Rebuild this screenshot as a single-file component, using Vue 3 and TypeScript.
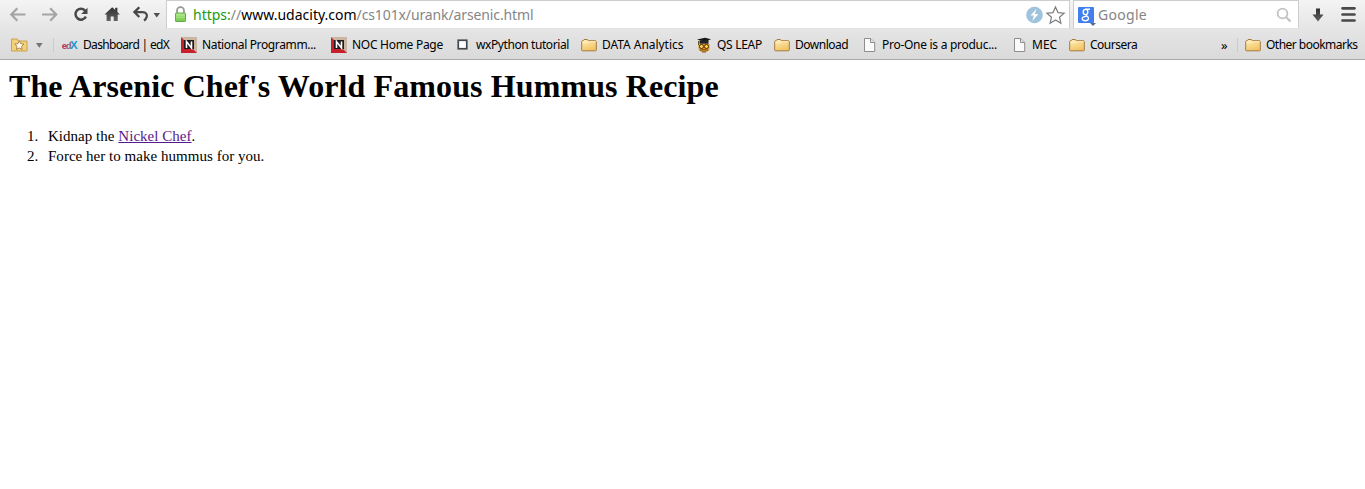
<script setup lang="ts">
interface Bookmark {
  label: string
  icon: 'edx' | 'news' | 'square' | 'folder' | 'owl' | 'page'
  width: number
  spacing: number
}

const bookmarks: Bookmark[] = [
  { label: 'Dashboard | edX', icon: 'edx', width: 119, spacing: -0.67 },
  { label: 'National Programm...', icon: 'news', width: 150, spacing: -0.36 },
  { label: 'NOC Home Page', icon: 'news', width: 124, spacing: -0.28 },
  { label: 'wxPython tutorial', icon: 'square', width: 126, spacing: -0.41 },
  { label: 'DATA Analytics', icon: 'folder', width: 115, spacing: -0.04 },
  { label: 'QS LEAP', icon: 'owl', width: 78, spacing: -0.3 },
  { label: 'Download', icon: 'folder', width: 87, spacing: -0.5 },
  { label: 'Pro-One is a produc...', icon: 'page', width: 150, spacing: -0.28 },
  { label: 'MEC', icon: 'page', width: 58, spacing: 0 },
  { label: 'Coursera', icon: 'folder', width: 80, spacing: -0.5 },
]
</script>

<template>
  <div class="window">
    <svg class="defs" width="0" height="0" aria-hidden="true">
      <defs>
        <linearGradient id="folderFill" x1="0" y1="0" x2="0.4" y2="1">
          <stop offset="0" stop-color="#fff0bd" />
          <stop offset="1" stop-color="#f3c566" />
        </linearGradient>
        <linearGradient id="lockFill" x1="0" y1="0" x2="0" y2="1">
          <stop offset="0" stop-color="#b4ea8c" />
          <stop offset="1" stop-color="#72c94a" />
        </linearGradient>
        <linearGradient id="darkFill" x1="0" y1="0" x2="0" y2="1">
          <stop offset="0" stop-color="#303030" />
          <stop offset="1" stop-color="#636363" />
        </linearGradient>
        <symbol id="folder" viewBox="0 0 16 16">
          <path d="M.7 13V4.400l.8-.7h.7L3 2.500h3.500l.8 1.200h7.200l.8.7V13q0 .8-.9.800H1.500q-.8 0-.8-.8z" fill="url(#folderFill)" stroke="#a77b3d" />
          <path d="M1.500 5.500h5.300l1-.9h6.700" fill="none" stroke="#fff3cd" stroke-width=".8" />
        </symbol>
      </defs>
    </svg>

    <header class="chrome">
      <div class="toolbar">
        <svg class="nav" width="166" height="29" viewBox="0 0 166 29">
          <g fill="none" stroke="#a4a4a4" stroke-width="2.2">
            <path d="M25.500 14.500H11.800M17.300 8.300l-6 6.200 6 6.200" />
            <path d="M42 14.500h13.700M50.200 8.300l6 6.200-6 6.200" />
          </g>
          <path d="M85.300 10.700a5.500 5.500 0 1 0 .6 6" fill="none" stroke="#484848" stroke-width="2.500" />
          <path d="M87.500 7.700v6.200h-6.300z" fill="#484848" />
          <path d="M104.500 14.600l7.700-7.400 3 2.800V7.800h2.200v4.300l2.500 2.500h-2.200v6.400h-4v-4.600h-3v4.600h-4.100v-6.400z" fill="url(#darkFill)" />
          <path d="M136 12.100h6.300c3.900 0 5.100 2.300 4.400 4.800-.4 1.500-1.400 2.800-2.700 3.600" fill="none" stroke="#484848" stroke-width="2.200" />
          <path d="M134.800 12.100h2M139.300 7.200l-4.900 4.900 4.900 4.900" fill="none" stroke="#484848" stroke-width="2.300" />
          <path d="M153.500 13h6.500l-3.250 4.500z" fill="#505050" />
        </svg>

        <div class="address">
          <svg class="lock" width="13" height="17" viewBox="0 0 13 17">
            <path d="M3 8V4.500a3.500 3.300 0 0 1 7 0V8" fill="none" stroke="#919791" stroke-width="1.700" />
            <rect x="1.500" y="7" width="10" height="8.500" rx=".6" fill="url(#lockFill)" stroke="#67a94e" />
            <path d="M2.500 9.500h8M2.500 11.500h8" stroke="#a8e489" stroke-width=".7" />
          </svg>
          <span class="url"><span class="scheme">https:</span><span class="muted">//</span>www.udacity.com<span class="muted path">/cs101x/urank/arsenic.html</span></span>
          <svg class="actions" width="42" height="22" viewBox="0 0 42 22">
            <circle cx="9.500" cy="11" r="8.300" fill="#9fc3dd" />
            <path d="M11.500 5l-6 6.600h3.300L7.400 17l6-7h-3.600z" fill="#fff" />
            <path d="M30.500 2.900l2.500 5.700 6.100.6-4.600 4 1.400 6-5.400-3.200-5.400 3.200 1.400-6-4.600-4 6.100-.6z" fill="#fff" stroke="#7d7d7d" stroke-width="1.200" />
          </svg>
        </div>

        <div class="search">
          <span class="engine">
            <svg class="engine-letter" width="16" height="16" viewBox="0 0 16 16">
              <g fill="none" stroke="#fff" stroke-width="1.400">
                <ellipse cx="7.500" cy="5" rx="2.300" ry="2.600" />
                <path d="M7 2.300h5M8.700 7.500c-2 1 1.600 1.500 1.800 3.700.1 1.700-1.500 2.500-3.200 2.500S4 12.900 4.200 11.500c.2-1.600 2-2.100 4.300-2.100" />
              </g>
            </svg>
            <svg class="engine-caret" width="6" height="4" viewBox="0 0 6 4"><path d="M0 0h6L3 3z" fill="#526a91" /></svg>
          </span>
          <span class="placeholder">Google</span>
          <svg class="lens" width="16" height="16" viewBox="0 0 16 16">
            <circle cx="6.500" cy="6.500" r="4.900" fill="none" stroke="#c2c2c2" stroke-width="1.800" />
            <path d="M10 10l4.500 4.500" stroke="#c2c2c2" stroke-width="2.200" />
          </svg>
        </div>

        <svg class="tools" width="66" height="29" viewBox="0 0 66 29">
          <path d="M17 8.500h4v6h3.500l-5.500 7-5.500-7H17z" fill="url(#darkFill)" />
          <path d="M43.500 8.300h12M43.500 14.500h12M43.500 20.500h12" stroke="#484848" stroke-width="2.700" stroke-linecap="round" />
        </svg>
      </div>

      <nav class="bookmarks">
        <span class="favorites">
          <svg width="17" height="14" viewBox="0 0 17 14">
            <path d="M.5 13V1h5.700l1.300 2H16v10z" fill="#f3d17b" stroke="#cba24f" />
            <path d="M8.300 2.800l1.400 2.900 3.200.4-2.300 2.200.6 3.200-2.900-1.500-2.900 1.500.6-3.200-2.300-2.200 3.200-.4z" fill="#fffbe8" stroke="#94733c" stroke-width=".8" />
          </svg>
          <svg width="7" height="5" viewBox="0 0 7 5"><path d="M0 0h6.600L3.300 4.800z" fill="#747474" /></svg>
        </span>
        <span class="divider"></span>

        <span v-for="item in bookmarks" :key="item.label" class="bookmark" :style="{ width: item.width + 'px' }">
          <svg class="icon" width="16" height="16" viewBox="0 0 16 16">
            <g v-if="item.icon === 'edx'" font-family="Liberation Sans, sans-serif" font-weight="bold">
              <text x="-.3" y="11.500" font-size="9.500" fill="#b92b63">e</text>
              <text x="3.800" y="11.500" font-size="9.500" fill="#8b6073">d</text>
              <text x="8" y="11.500" font-size="11.500" fill="#189bd3">X</text>
            </g>
            <g v-else-if="item.icon === 'news'">
              <path d="M0 0h16v16z" fill="#c9b5a2" />
              <path d="M0 0v16h16z" fill="#c5202c" />
              <rect x="3" y="3" width="10" height="9" fill="#211c1c" />
              <path d="M5.500 11v-6.500l5 6.500v-6.500" fill="none" stroke="#fff" stroke-width="1.600" />
            </g>
            <rect v-else-if="item.icon === 'square'" x="3.250" y="3.250" width="8.500" height="8.500" fill="#fff" stroke="#424850" stroke-width="1.700" />
            <g v-else-if="item.icon === 'owl'">
              <path d="M2.500 7h11v4q0 4-5.500 4t-5.500-4z" fill="#d6942a" />
              <path d="M1 2.500l8-1.700 6 1.400-6.500 2.600z" fill="#171717" />
              <path d="M3.500 3.500v3.200h9V3" fill="#222" />
              <path d="M2.500 4v4" stroke="#6d5522" />
              <circle cx="5.500" cy="9.500" r="2" fill="#ffd554" stroke="#543006" />
              <circle cx="10.500" cy="9.500" r="2" fill="#ffd554" stroke="#543006" />
              <path d="M4 13.300q4-1.500 8 0M6 15h4" fill="none" stroke="#633807" stroke-width=".8" />
            </g>
            <g v-else-if="item.icon === 'page'">
              <path d="M3.500 1.500h6.200l4 4v9H3.500z" fill="#fafafa" stroke="#8d8d8d" />
              <path d="M9.500 1.500v4h4" fill="#e5e5e5" stroke="#8d8d8d" />
            </g>
            <use v-else href="#folder" />
          </svg>
          <span :style="{ letterSpacing: item.spacing + 'px' }">{{ item.label }}</span>
        </span>

        <span class="overflow">»</span>
        <span class="divider end"></span>
        <span class="bookmark other">
          <svg class="icon" width="16" height="16"><use href="#folder" /></svg>
          <span class="other-label">Other bookmarks</span>
        </span>
      </nav>
    </header>

    <main class="document">
      <h1>The Arsenic Chef's World Famous Hummus Recipe</h1>
      <ol>
        <li>Kidnap the <a href="#">Nickel Chef</a>.</li>
        <li>Force her to make hummus for you.</li>
      </ol>
    </main>
  </div>
</template>

<style>
body {
  margin: 0;
  background: #fff;
}
</style>

<style scoped>
.window {
  width: 1365px;
  height: 489px;
  overflow: hidden;
  background: #fff;
  color: #000;
}
.defs {
  position: absolute;
}
.chrome {
  box-sizing: border-box;
  height: 60px;
  background: linear-gradient(#f4f4f4, #e5e5e5 29px, #dadada);
  border-bottom: 1px solid #a9a9a9;
  font-family: "Noto Sans", "Open Sans", sans-serif;
}
.toolbar {
  display: flex;
  height: 29px;
}
.nav,
.tools,
.icon {
  display: block;
  flex: none;
}
.address,
.search {
  box-sizing: border-box;
  display: flex;
  align-items: center;
  height: 29px;
  background: #fff;
  border: 1px solid #cdcdcd;
  border-bottom-color: #e2e2e2;
}
.address {
  width: 904px;
  padding: 0 2px 0 7px;
}
.url {
  margin-left: 6px;
  font-size: 14px;
  line-height: 20px;
  white-space: pre;
}
.scheme {
  color: #189a18;
}
.muted {
  color: #868686;
}
.path {
  letter-spacing: -0.12px;
}
.actions {
  margin-left: auto;
}
.search {
  width: 226px;
  margin-left: 3px;
  padding: 0 6px 0 4px;
}
.engine {
  position: relative;
  width: 16px;
  height: 16px;
  border-radius: 1px;
  background: #427fed;
}
.engine-letter {
  display: block;
}
.engine-caret {
  position: absolute;
  left: 12px;
  bottom: -4px;
}
.placeholder {
  margin-left: 4px;
  font-size: 14px;
  letter-spacing: 0.3px;
  color: #858585;
}
.lens {
  margin-left: auto;
}
.bookmarks {
  display: flex;
  align-items: center;
  height: 30px;
  padding: 1px 0 0 11px;
  font-size: 12px;
  line-height: 16px;
  white-space: nowrap;
}
.favorites {
  display: flex;
  align-items: center;
  gap: 8px;
  width: 41px;
}
.divider {
  width: 1px;
  height: 14px;
  margin: 0 8px 0 1px;
  background: #c5ccd1;
}
.divider.end {
  margin: 0 7px 0 0;
}
.bookmark {
  display: flex;
  flex: none;
  align-items: center;
  gap: 5px;
}
.other-label {
  letter-spacing: -0.52px;
}
.overflow {
  width: 16px;
  margin-left: 72px;
  font-size: 13px;
}
.document {
  padding: 0 8px;
  font-family: "Liberation Serif", serif;
}
h1 {
  margin: 0;
  padding: 8px 0 0 1px;
  font-size: 32px;
  line-height: 36px;
  letter-spacing: 0.1px;
  white-space: nowrap;
}
ol {
  margin: 22px 0 0;
  padding-left: 40px;
  font-size: 15px;
  line-height: 20px;
  letter-spacing: 0.03px;
  list-style: none;
  counter-reset: step;
}
li::before {
  counter-increment: step;
  content: counter(step) ".";
  display: inline-block;
  width: 21px;
  margin-left: -21px;
}
a {
  color: #551a8b;
}
</style>
